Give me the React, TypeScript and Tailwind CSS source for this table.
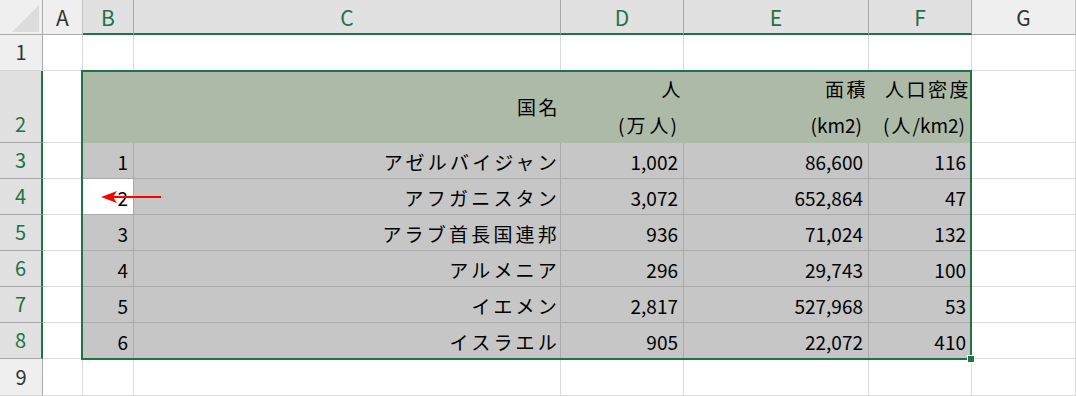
const font = 'font-[Noto_Sans_CJK_JP,sans-serif]';

const columns = [
  { label: 'A', selected: false },
  { label: 'B', selected: true },
  { label: 'C', selected: true },
  { label: 'D', selected: true },
  { label: 'E', selected: true },
  { label: 'F', selected: true },
  { label: 'G', selected: false },
];

const countries = [
  { no: '1', name: 'アゼルバイジャン', pop: '1,002', area: '86,600', density: '116' },
  { no: '2', name: 'アフガニスタン', pop: '3,072', area: '652,864', density: '47' },
  { no: '3', name: 'アラブ首長国連邦', pop: '936', area: '71,024', density: '132' },
  { no: '4', name: 'アルメニア', pop: '296', area: '29,743', density: '100' },
  { no: '5', name: 'イエメン', pop: '2,817', area: '527,968', density: '53' },
  { no: '6', name: 'イスラエル', pop: '905', area: '22,072', density: '410' },
];

function RowHeader({ n, selected }: { n: number; selected: boolean }) {
  return (
    <div
      className={
        selected
          ? 'flex items-end justify-center bg-[#e1e1e1] text-[#217346] border-b border-b-[#a6a6a6] border-r-2 border-r-[#217346]'
          : 'flex items-end justify-center bg-[#efefef] text-[#333] border-b border-b-[#d4d4d4] border-r border-r-[#ababab]'
      }
    >
      <span className="leading-[36px] text-[20px]">{n}</span>
    </div>
  );
}

function EmptyCell() {
  return <div className="border-r border-b border-[#dadada] bg-white" />;
}

function DataCell({ text, jp, active }: { text: string; jp?: boolean; active?: boolean }) {
  return (
    <div
      className={
        active
          ? 'flex items-center justify-end pr-[5px] pt-[2px] bg-white border-r border-b border-[#aaaaaa]'
          : 'flex items-center justify-end pr-[5px] pt-[2px] bg-[#c6c6c6] border-r border-b border-[#aaaaaa]'
      }
    >
      <span className={jp ? 'text-[19px] leading-[34px] tracking-[3.2px] mr-[-5px]' : 'text-[19px] leading-[34px]'}>
        {text}
      </span>
    </div>
  );
}

// kanji in the unit line get a little air on both sides, latin stays tight
function UnitLine({ text }: { text: string }) {
  return (
    <span className="text-[19px] leading-[36px] mr-[2px]">
      {text.split('').map((ch, i) =>
        /[\u3000-\u9fff]/.test(ch) ? (
          <span key={i} className="px-[2px]">
            {ch}
          </span>
        ) : (
          <span key={i}>{ch}</span>
        )
      )}
    </span>
  );
}

function HeadCell({ lines }: { lines: string[] }) {
  return (
    <div className="flex flex-col items-end justify-center pr-[5px] bg-[#aebaa8]">
      {lines.map((l, i) =>
        i === 0 ? (
          <span key={l} className="text-[19px] leading-[36px] tracking-[2.5px] mr-[-4px]">
            {l}
          </span>
        ) : (
          <UnitLine key={l} text={l} />
        )
      )}
    </div>
  );
}

export default function App() {
  return (
    <div className={`relative w-[1076px] h-[396px] overflow-hidden bg-white text-black ${font}`}>
      <div className="grid grid-cols-[43px_40px_51px_427px_123px_185px_103px_104px] grid-rows-[35px_36px_72px_repeat(6,36px)_37px]">
        {/* column headers */}
        <div className="relative bg-[#efefef] border-r border-r-[#ababab] border-b border-b-[#ababab]">
          <svg className="absolute left-0 top-0" width="42" height="34" viewBox="0 0 42 34">
            <polygon points="12,32 39,32 39,5" fill="#dcdcdc" />
          </svg>
        </div>
        {columns.map((c) => (
          <div
            key={c.label}
            className={
              c.selected
                ? 'flex items-center justify-center pt-[2px] bg-[#e1e1e1] text-[#217346] border-r border-r-[#a8a8a8] border-b-2 border-b-[#217346] text-[21px]'
                : 'flex items-center justify-center pt-[2px] bg-[#efefef] text-[#333] border-r border-r-[#c4c4c4] border-b border-b-[#ababab] text-[21px]'
            }
          >
            {c.label}
          </div>
        ))}

        {/* row 1 */}
        <RowHeader n={1} selected={false} />
        {columns.map((c) => (
          <EmptyCell key={'r1' + c.label} />
        ))}

        {/* row 2: table header */}
        <RowHeader n={2} selected={true} />
        <EmptyCell />
        <HeadCell lines={[]} />
        <HeadCell lines={['国名']} />
        <HeadCell lines={['人', '(万人)']} />
        <HeadCell lines={['面積', '(km2)']} />
        <HeadCell lines={['人口密度', '(人/km2)']} />
        <EmptyCell />

        {countries.map((r, i) => (
          <div key={r.no} className="contents">
            <RowHeader n={i + 3} selected={true} />
            <EmptyCell />
            <DataCell text={r.no} active={i === 1} />
            <DataCell text={r.name} jp />
            <DataCell text={r.pop} />
            <DataCell text={r.area} />
            <DataCell text={r.density} />
            <EmptyCell />
          </div>
        ))}

        {/* row 9 */}
        <RowHeader n={9} selected={false} />
        {columns.map((c) => (
          <EmptyCell key={'r9' + c.label} />
        ))}
      </div>

      {/* selection outline B2:F8 */}
      <div className="absolute left-[81px] top-[70px] w-[891px] h-[290px] border-2 border-[#217346] pointer-events-none" />
      <div className="absolute left-[967px] top-[355px] w-[8px] h-[8px] bg-white flex items-center justify-center">
        <div className="w-[6px] h-[6px] bg-[#217346]" />
      </div>

      {/* red arrow pointing at B4 */}
      <svg className="absolute left-[98px] top-[189px]" width="66" height="16" viewBox="0 0 66 16">
        <line x1="12" y1="8" x2="63" y2="8" stroke="#ff0000" strokeWidth="2.2" />
        <polygon points="3,8 19,2 15,8 19,14" fill="#ff0000" />
      </svg>
    </div>
  );
}
